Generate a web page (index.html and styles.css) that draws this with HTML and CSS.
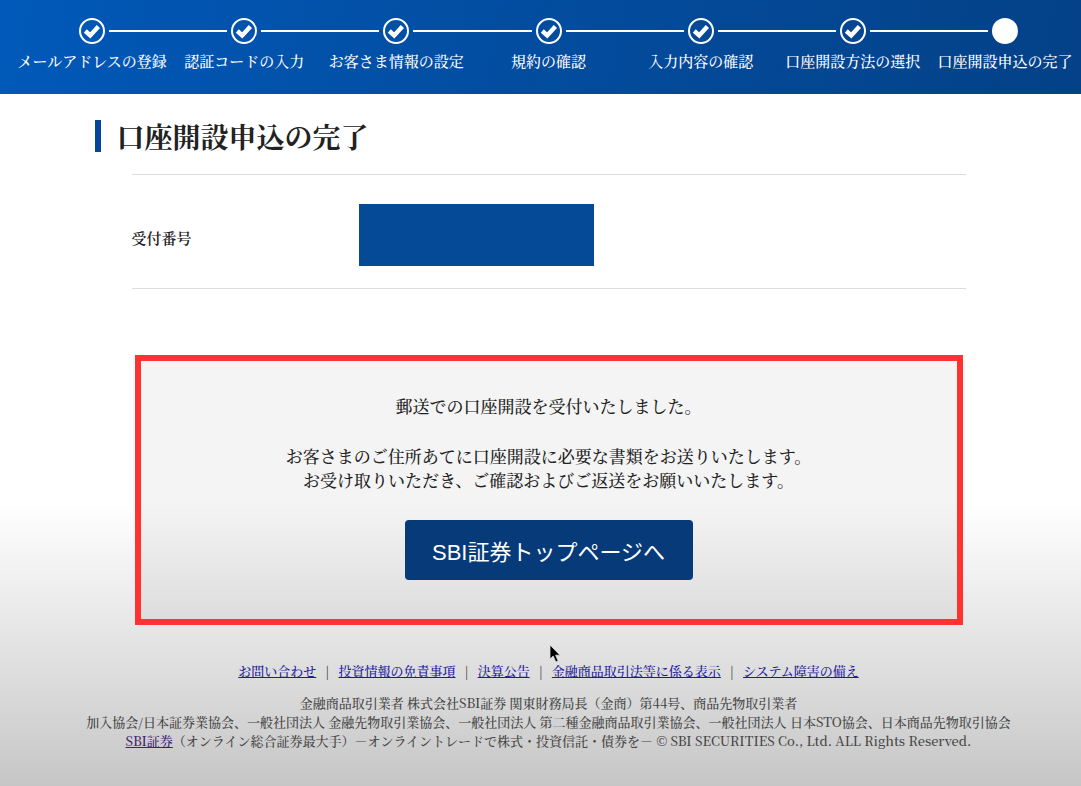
FILE: index.html
```html
<!DOCTYPE html>
<html lang="ja">
<head>
<meta charset="utf-8">
<meta name="viewport" content="width=device-width, initial-scale=1">
<title>口座開設申込の完了</title>
<link rel="stylesheet" href="styles.css">
</head>
<body>
<svg class="symbols" aria-hidden="true">
  <symbol id="check" viewBox="0 0 26 26">
    <circle cx="13" cy="13" r="12" fill="none" stroke="#fff" stroke-width="2"/>
    <path d="M6.300 13 11.200 17.400 19.400 8.400" fill="none" stroke="#fff" stroke-width="4.400"/>
  </symbol>
  <symbol id="dot" viewBox="0 0 26 26"><circle cx="13" cy="13" r="13" fill="#fff"/></symbol>
</svg>
<header class="header">
  <ol class="steps">
    <li class="step"><span class="marker"><svg class="icon"><use href="#check"/></svg></span>メールアドレスの登録</li>
    <li class="step"><span class="marker"><svg class="icon"><use href="#check"/></svg></span>認証コードの入力</li>
    <li class="step"><span class="marker"><svg class="icon"><use href="#check"/></svg></span>お客さま情報の設定</li>
    <li class="step"><span class="marker"><svg class="icon"><use href="#check"/></svg></span>規約の確認</li>
    <li class="step"><span class="marker"><svg class="icon"><use href="#check"/></svg></span>入力内容の確認</li>
    <li class="step"><span class="marker"><svg class="icon"><use href="#check"/></svg></span>口座開設方法の選択</li>
    <li class="step" aria-current="step"><span class="marker"><svg class="icon"><use href="#dot"/></svg></span>口座開設申込の完了</li>
  </ol>
</header>
<div class="page">
  <main class="main">
    <h1 class="title">口座開設申込の完了</h1>
    <dl class="receipt">
      <dt class="receipt-label">受付番号</dt>
      <dd class="receipt-value"></dd>
    </dl>
    <section class="notice">
      <p class="text">郵送での口座開設を受付いたしました。</p>
      <p class="text">お客さまのご住所あてに口座開設に必要な書類をお送りいたします。<br>お受け取りいただき、ご確認およびご返送をお願いいたします。</p>
      <button class="button" type="button">SBI証券トップページへ</button>
    </section>
  </main>
  <footer class="footer">
    <nav class="links">
      <a href="#">お問い合わせ</a><span>|</span><a href="#">投資情報の免責事項</a><span>|</span><a href="#">決算公告</a><span>|</span><a href="#">金融商品取引法等に係る表示</a><span>|</span><a href="#">システム障害の備え</a>
    </nav>
    <p class="legal">金融商品取引業者 株式会社SBI証券 関東財務局長（金商）第44号、商品先物取引業者<br>加入協会/日本証券業協会、一般社団法人 金融先物取引業協会、一般社団法人 第二種金融商品取引業協会、一般社団法人 日本STO協会、日本商品先物取引協会<br><a class="visited" href="#">SBI証券</a>（オンライン総合証券最大手）－オンライントレードで株式・投資信託・債券を－ © SBI SECURITIES Co., Ltd. ALL Rights Reserved.</p>
    <svg class="cursor" viewBox="0 0 12 19" aria-hidden="true"><path d="M1 1v14l3.200-3 2.600 6 2.400-1-2.600-5.800h4.400z" fill="#000" stroke="#ddd" stroke-width=".8"/></svg>
  </footer>
</div>
</body>
</html>
```
FILE: styles.css
```css
* {
  box-sizing: border-box;
}

body {
  margin: 0;
  min-height: 100vh;
  color: #222;
  background: linear-gradient(#fff 64%, #e3e3e3 82%, #c6c6c6 100%);
  font-family: "Noto Serif CJK JP", "Liberation Serif", "Noto Sans CJK JP", serif;
  font-weight: 500;
}

.symbols {
  display: none;
}

.header {
  padding: 18px 0 23px 16px;
  color: #fff;
  background: linear-gradient(100deg, #0159b9, #034a9a 60%, #044187);
}

.steps {
  display: flex;
  margin: 0;
  padding: 0;
  list-style: none;
}

.step {
  flex: 1 0 0;
  font-size: 15px;
  line-height: 20px;
  text-align: center;
  white-space: nowrap;
}

.marker {
  display: flex;
  align-items: center;
  gap: 4px;
  margin-bottom: 7px;
}

.marker::before,
.marker::after {
  content: "";
  flex: 1;
  height: 2px;
  background: #fff;
}

.step:first-child .marker::before,
.step:last-child .marker::after {
  visibility: hidden;
}

.icon {
  width: 26px;
  height: 26px;
}

.page {
  padding-left: 16px;
}

.main {
  max-width: 834px;
  margin: 0 auto;
  padding-top: 26px;
}

.title {
  margin: 0 0 22px -37px;
  padding-left: 16px;
  border-left: 6px solid #04479a;
  font-size: 28px;
  line-height: 32px;
}

.receipt {
  display: flex;
  align-items: center;
  margin: 0;
  padding: 29px 0 22px;
  border: solid #ddd;
  border-width: 1px 0;
}

.receipt-label {
  width: 227px;
  padding-top: 4px;
  font-size: 15px;
  font-weight: 600;
}

.receipt-value {
  width: 235px;
  height: 62px;
  margin: 0;
  background: #044a96;
}

.notice {
  margin: 66px 3px 0;
  padding: 33px 16px 39px;
  border: 6px solid #ff3131;
  background: rgba(0, 0, 0, .045);
  text-align: center;
}

.text {
  margin: 0 0 26px;
  font-size: 17px;
  line-height: 24px;
}

.button {
  display: block;
  width: 288px;
  height: 60px;
  margin: 28px auto 0;
  padding: 0;
  border: 0;
  border-radius: 4px;
  color: #fff;
  background: #063a78;
  font: 22px "Liberation Sans", "Noto Sans CJK JP", sans-serif;
}

.footer {
  position: relative;
  padding: 36px 0 36px;
  color: #444;
  font-size: 13px;
  line-height: 19px;
  text-align: center;
}

.links {
  display: flex;
  flex-wrap: wrap;
  justify-content: center;
  gap: 9px;
}

a {
  color: #22189c;
}

.visited {
  color: #402070;
}

.legal {
  margin: 13px 0 0;
}

.cursor {
  position: absolute;
  top: 19px;
  left: 50%;
  width: 12px;
  height: 19px;
}
```
